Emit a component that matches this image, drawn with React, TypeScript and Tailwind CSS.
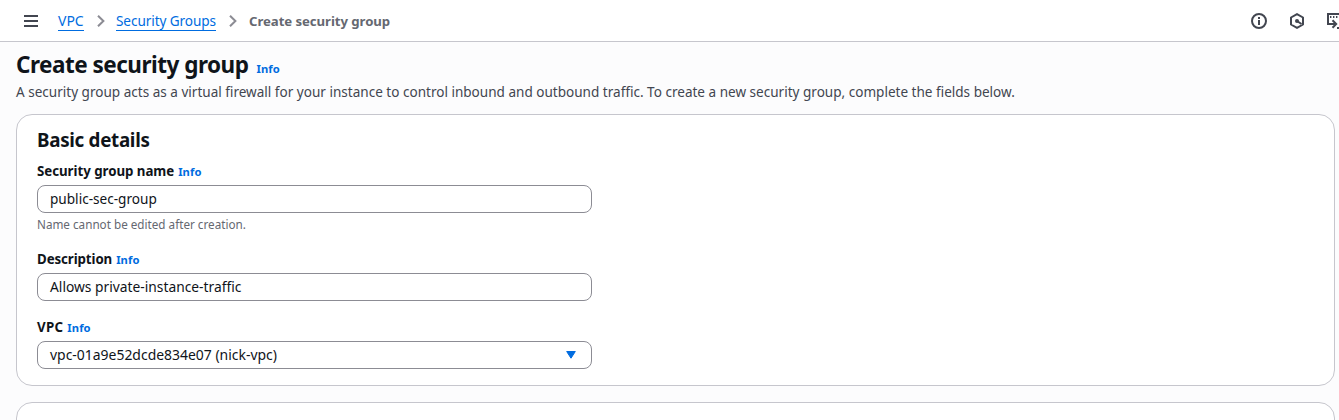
import type { ReactNode } from "react";

function InfoLink({ className = "" }: { className?: string }) {
  return (
    <a href="#" className={`text-[11.2px] font-bold tracking-[0.1px] text-[#006ce0] ${className}`}>
      Info
    </a>
  );
}

function Chevron() {
  return (
    <svg width="8" height="14" viewBox="0 0 8 14" fill="none" stroke="#8c8c94" strokeWidth="2" className="shrink-0">
      <path d="M1 1.7 6.4 7 1 12.3" />
    </svg>
  );
}

function Label({ children }: { children: ReactNode }) {
  return (
    <div className="flex h-5 items-baseline gap-1 text-[13.3px] leading-5 font-bold tracking-[-0.04px] text-[#0f141a]">
      {children}
      <InfoLink />
    </div>
  );
}

function Box({ children }: { children: ReactNode }) {
  return (
    <div className="mt-1 flex h-7 w-[555px] items-center justify-between rounded-lg border border-[#8c8c94] bg-white pr-[15px] pl-3 text-[#0f141a]">
      {children}
    </div>
  );
}

export default function App() {
  return (
    <div className="h-[420px] overflow-hidden bg-[#fcfcfd] font-['Noto_Sans',sans-serif] text-sm whitespace-nowrap">
      <header className="flex h-[42px] items-center border-b border-[#c6c6cd] bg-white pl-6">
        <svg width="14" height="12" viewBox="0 0 14 12" stroke="#424650" strokeWidth="2" className="mr-5 shrink-0">
          <path d="M0 1h14M0 6h14M0 11h14" />
        </svg>
        <nav className="flex items-center">
          <a href="#" className="h-[21px] w-[26px] border-b border-[#006ce0] leading-[22px] text-[#006ce0]">
            VPC
          </a>
          <span className="ml-[13px] w-[19px]"><Chevron /></span>
          <a href="#" className="h-[21px] w-[100px] border-b border-[#006ce0] text-[13.6px] leading-[22px] tracking-[-0.09px] text-[#006ce0]">
            Security Groups
          </a>
          <span className="ml-[13px] w-5"><Chevron /></span>
          <span className="text-[13.2px] leading-5 font-bold tracking-[-0.06px] text-[#656871]">Create security group</span>
        </nav>
        <div className="ml-auto flex h-4 w-[88px] shrink-0 gap-[22px] overflow-hidden">
          <svg width="16" height="16" viewBox="0 0 16 16" fill="none" stroke="#424650" strokeWidth="2" className="shrink-0">
            <circle cx="8" cy="8" r="7" />
            <path d="M8 7v5M8 4v2" />
          </svg>
          <svg width="16" height="16" viewBox="0 0 16 16" fill="none" stroke="#424650" strokeWidth="2" className="shrink-0">
            <path d="M8 1.1 14 4.5v7L8 14.9 2 11.5v-7z" strokeLinejoin="round" />
            <path d="M8 8l4.5 3" />
            <circle cx="8" cy="8" r="2" fill="#424650" stroke="none" />
          </svg>
          <svg width="16" height="16" viewBox="0 0 16 16" fill="none" stroke="#424650" className="shrink-0">
            <path d="M15 9V1H1v10h7.5M5.5 7.2 9.2 11l-3.7 3.8" strokeWidth="2" />
            <path d="M3 4h1.4M6 4h1.4M9 4h1.4M10 15h6" strokeWidth="1.8" />
          </svg>
        </div>
      </header>

      <main className="pr-1 pl-4">
        <div className="flex items-baseline gap-2 pt-2">
          <h1 className="text-[22.5px] leading-[30px] font-bold tracking-[-0.5px] text-[#0f141a]">Create security group</h1>
          <InfoLink />
        </div>
        <p className="mt-0.5 text-[13.56px] leading-5 text-[#424650]">
          A security group acts as a virtual firewall for your instance to control inbound and outbound traffic. To create a new security group, complete the fields below.
        </p>

        <section className="mt-3 h-[272px] rounded-2xl border border-[#c6c6cd] bg-white px-5 pt-[13px]">
          <h2 className="text-[18.8px] leading-6 font-bold tracking-[-0.3px] text-[#0f141a]">Basic details</h2>
          <div className="mt-[9px] flex flex-col">
            <Label>Security group name</Label>
            <Box><span className="text-[13.6px]">public-sec-group</span></Box>
            <p className="mt-[3px] mb-px text-[11.7px] leading-4 text-[#656871]">Name cannot be edited after creation.</p>
          </div>
          <div className="mt-4">
            <Label><span className="tracking-[-0.1px]">Description</span></Label>
            <Box><span className="text-[13.8px]">Allows private-instance-traffic</span></Box>
          </div>
          <div className="mt-4">
            <Label><span className="tracking-[0.3px]">VPC</span></Label>
            <Box>
              <span className="text-[13.95px]">vpc-01a9e52dcde834e07 (nick-vpc)</span>
              <svg width="10" height="8" viewBox="0 0 10 8" fill="#006ce0" stroke="#006ce0" strokeLinejoin="round">
                <path d="M.7.5h8.6L5 7.2z" />
              </svg>
            </Box>
          </div>
        </section>
        <section className="mt-4 h-20 rounded-2xl border border-[#c6c6cd] bg-white" />
      </main>
    </div>
  );
}
